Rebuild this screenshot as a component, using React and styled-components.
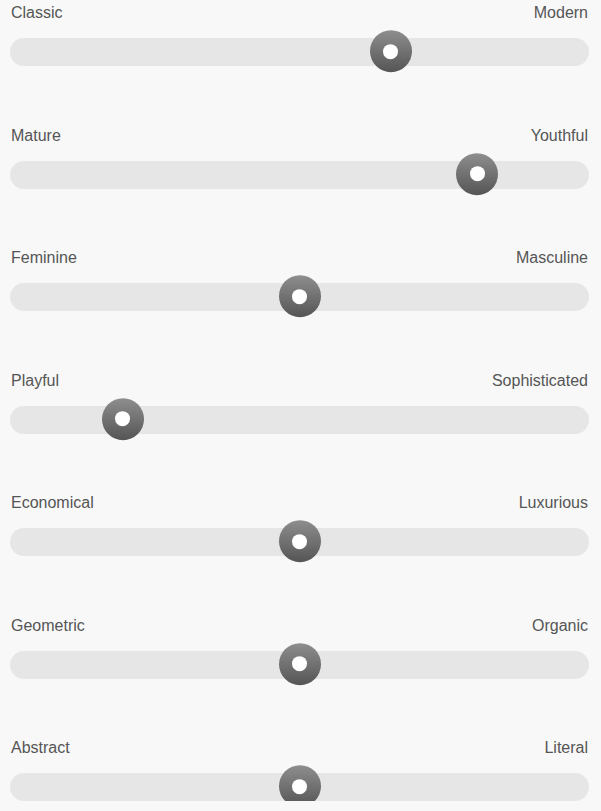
import styled, { createGlobalStyle } from 'styled-components'

const GlobalStyle = createGlobalStyle`
    body {
        margin: 0;
        background: #f8f8f8;
        font-family: "Liberation Sans", Arial, sans-serif;
    }
`

const sliders = [
    { left: 'Classic', right: 'Modern', value: 65.8 },
    { left: 'Mature', right: 'Youthful', value: 80.7 },
    { left: 'Feminine', right: 'Masculine', value: 50 },
    { left: 'Playful', right: 'Sophisticated', value: 19.5 },
    { left: 'Economical', right: 'Luxurious', value: 50 },
    { left: 'Geometric', right: 'Organic', value: 50 },
    { left: 'Abstract', right: 'Literal', value: 50 },
]

const App = () => (
    <>
        <GlobalStyle />
        <List>
            {sliders.map((s) => (
                <Row key={s.left}>
                    <Labels>
                        <Label>{s.left}</Label>
                        <Label>{s.right}</Label>
                    </Labels>
                    <Track>
                        <Thumb style={{ left: `${s.value}%` }} />
                    </Track>
                </Row>
            ))}
        </List>
    </>
)

const List = styled.div`
    display: flex;
    flex-direction: column;
    gap: 56.5px;
    padding: 0 12px 0 10px;
`

const Row = styled.div`
    display: flex;
    flex-direction: column;
    gap: 13px;
`

const Labels = styled.div`
    display: flex;
    justify-content: space-between;
    padding: 1px 1px 0 1px;
`

const Label = styled.span`
    font-size: 16px;
    line-height: 24px;
    color: #555555;
`

const Track = styled.div`
    position: relative;
    height: 28px;
    border-radius: 14px;
    background: #e6e6e6;
`

const Thumb = styled.div`
    position: absolute;
    top: 50%;
    width: 42px;
    height: 42px;
    border-radius: 50%;
    transform: translate(-50%, -52%);
    background: linear-gradient(to bottom, #8e8e8e, #555555);
    display: flex;
    align-items: center;
    justify-content: center;
    &::after {
        content: '';
        width: 15px;
        height: 15px;
        border-radius: 50%;
        background: #ffffff;
    }
`

export default App
